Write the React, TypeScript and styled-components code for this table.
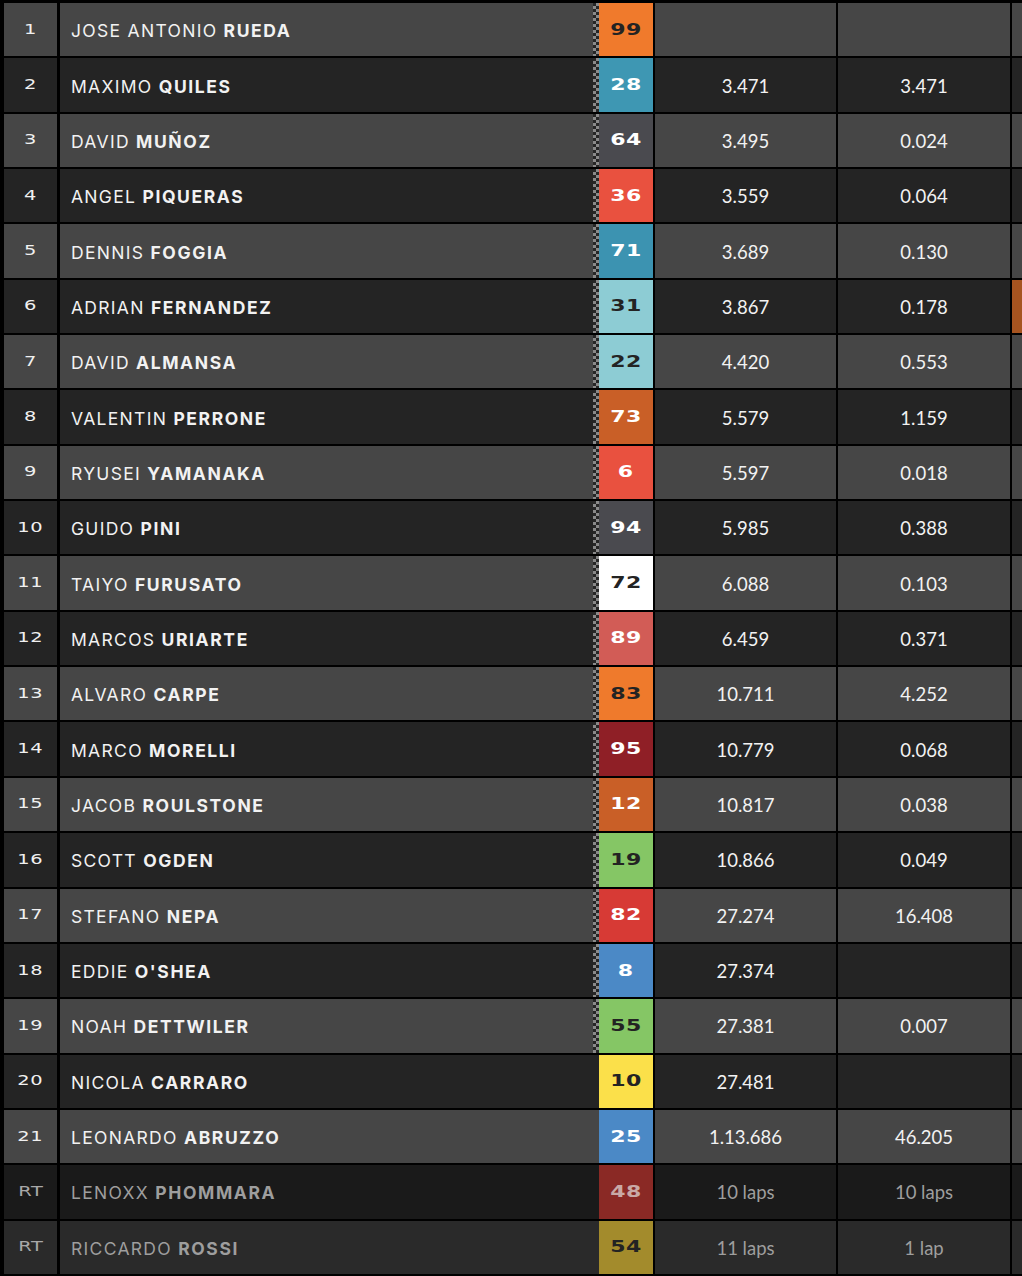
import React from "react";
import styled, { createGlobalStyle } from "styled-components";

const Global = createGlobalStyle`
  html, body { margin: 0; padding: 0; background: #000; }
  body { font-family: Inter, Lato, sans-serif; }
`;

type Rider = {
  pos: string;
  first: string;
  last: string;
  num: string;
  color: string;
  dark?: boolean;
  time: string;
  diff: string;
  flag?: boolean;
  edge?: string;
  retired?: boolean;
  numColor?: string;
};

const riders: Rider[] = [
  { pos: "1", first: "JOSE ANTONIO", last: "RUEDA", num: "99", color: "#f07a2c", dark: true, time: "", diff: "", flag: true },
  { pos: "2", first: "MAXIMO", last: "QUILES", num: "28", color: "#3e97b3", time: "3.471", diff: "3.471", flag: true },
  { pos: "3", first: "DAVID", last: "MUÑOZ", num: "64", color: "#4a4a4f", time: "3.495", diff: "0.024", flag: true },
  { pos: "4", first: "ANGEL", last: "PIQUERAS", num: "36", color: "#e9513f", time: "3.559", diff: "0.064", flag: true },
  { pos: "5", first: "DENNIS", last: "FOGGIA", num: "71", color: "#3c93b1", time: "3.689", diff: "0.130", flag: true },
  { pos: "6", first: "ADRIAN", last: "FERNANDEZ", num: "31", color: "#8dccd4", dark: true, time: "3.867", diff: "0.178", flag: true, edge: "#a65420" },
  { pos: "7", first: "DAVID", last: "ALMANSA", num: "22", color: "#8dccd4", dark: true, time: "4.420", diff: "0.553", flag: true },
  { pos: "8", first: "VALENTIN", last: "PERRONE", num: "73", color: "#c95f27", time: "5.579", diff: "1.159", flag: true },
  { pos: "9", first: "RYUSEI", last: "YAMANAKA", num: "6", color: "#e9513f", time: "5.597", diff: "0.018", flag: true },
  { pos: "10", first: "GUIDO", last: "PINI", num: "94", color: "#4a4a4f", time: "5.985", diff: "0.388", flag: true },
  { pos: "11", first: "TAIYO", last: "FURUSATO", num: "72", color: "#ffffff", dark: true, time: "6.088", diff: "0.103", flag: true },
  { pos: "12", first: "MARCOS", last: "URIARTE", num: "89", color: "#d25c56", time: "6.459", diff: "0.371", flag: true },
  { pos: "13", first: "ALVARO", last: "CARPE", num: "83", color: "#ef7a2c", dark: true, time: "10.711", diff: "4.252", flag: true },
  { pos: "14", first: "MARCO", last: "MORELLI", num: "95", color: "#8f1f26", time: "10.779", diff: "0.068", flag: true },
  { pos: "15", first: "JACOB", last: "ROULSTONE", num: "12", color: "#c95f27", time: "10.817", diff: "0.038", flag: true },
  { pos: "16", first: "SCOTT", last: "OGDEN", num: "19", color: "#85c665", dark: true, time: "10.866", diff: "0.049", flag: true },
  { pos: "17", first: "STEFANO", last: "NEPA", num: "82", color: "#d73a35", time: "27.274", diff: "16.408", flag: true },
  { pos: "18", first: "EDDIE", last: "O'SHEA", num: "8", color: "#4b89c6", time: "27.374", diff: "", flag: true },
  { pos: "19", first: "NOAH", last: "DETTWILER", num: "55", color: "#85c665", dark: true, time: "27.381", diff: "0.007", flag: true },
  { pos: "20", first: "NICOLA", last: "CARRARO", num: "10", color: "#fbe04a", dark: true, time: "27.481", diff: "" },
  { pos: "21", first: "LEONARDO", last: "ABRUZZO", num: "25", color: "#4b89c6", time: "1.13.686", diff: "46.205" },
  { pos: "RT", first: "LENOXX", last: "PHOMMARA", num: "48", color: "#8a2925", numColor: "#c9a9a6", time: "10 laps", diff: "10 laps", retired: true },
  { pos: "RT", first: "RICCARDO", last: "ROSSI", num: "54", color: "#a38b2c", dark: true, time: "11 laps", diff: "1 lap", retired: true },
];

const Table = styled.div`
  display: grid;
  grid-auto-rows: 53.35px;
  row-gap: 2px;
  padding: 3px 0 0 4px;
  width: 1018px;
  background: #000;
`;

const Row = styled.div<{ $bg: string; $fg: string }>`
  display: flex;
  align-items: stretch;
  --bg: ${(p) => p.$bg};
  color: ${(p) => p.$fg};
`;

const PosCell = styled.div`
  width: 53px;
  flex: none;
  background: var(--bg);
  display: flex;
  align-items: center;
  justify-content: center;
`;

const PosText = styled.span<{ $retired?: boolean }>`
  font-family: "DejaVu Sans", sans-serif;
  font-size: 13.7px;
  letter-spacing: 0.5px;
  display: inline-block;
  transform: scaleX(1.42);
  color: ${(p) => (p.$retired ? "#a8a8a8" : "#f0f0f0")};
  margin-top: -2px;
`;

const NameCell = styled.div`
  width: 533px;
  flex: none;
  margin-left: 3px;
  background: var(--bg);
  display: flex;
  align-items: center;
  padding-left: 11px;
  box-sizing: border-box;
  font-family: Inter, Lato, sans-serif;
  font-size: 17.5px;
  letter-spacing: 1.3px;
  padding-top: 2px;
`;

const First = styled.span`
  font-weight: 400;
  white-space: pre;
`;

const Last = styled.span`
  font-weight: 700;
  letter-spacing: 1.6px;
`;

const Checker = styled.div<{ $flag?: boolean }>`
  width: 6px;
  flex: none;
  background: ${(p) =>
    p.$flag
      ? "repeating-conic-gradient(#8a8a8a 0 25%, #262626 0 50%) 0 0 / 6px 6px"
      : "var(--bg)"};
`;

const Badge = styled.div<{ $color: string; $text: string }>`
  width: 54px;
  flex: none;
  background: ${(p) => p.$color};
  color: ${(p) => p.$text};
  display: flex;
  align-items: center;
  justify-content: center;
`;

const BadgeNum = styled.span`
  font-family: "DejaVu Sans", sans-serif;
  font-weight: 700;
  font-size: 15.5px;
  display: inline-block;
  transform: scaleX(1.42);
  letter-spacing: 0.3px;
  margin-top: 0px;
`;

const TimeCell = styled.div<{ $w: number }>`
  width: ${(p) => p.$w}px;
  flex: none;
  margin-left: 2px;
  background: var(--bg);
  display: flex;
  align-items: center;
  justify-content: center;
  font-family: Lato, sans-serif;
  font-size: 18.5px;
  font-weight: 400;
  padding-top: 1px;
  box-sizing: border-box;
`;

const Edge = styled.div<{ $color?: string }>`
  width: 10px;
  flex: none;
  margin-left: 2px;
  background: ${(p) => p.$color ?? "var(--bg)"};
`;

export default function App() {
  return (
    <>
      <Global />
      <Table>
        {riders.map((r, i) => {
          const odd = i % 2 === 0;
          const bg = r.retired ? (odd ? "#2a2a2a" : "#1a1a1a") : odd ? "#464646" : "#242424";
          const fg = r.retired ? "#9e9e9e" : "#f2f2f2";
          return (
            <Row key={i} $bg={bg} $fg={fg}>
              <PosCell>
                <PosText $retired={r.retired}>{r.pos}</PosText>
              </PosCell>
              <NameCell>
                <First>{r.first} </First>
                <Last>{r.last}</Last>
              </NameCell>
              <Checker $flag={r.flag} />
              <Badge $color={r.color} $text={r.numColor ?? (r.dark ? "#232323" : "#ffffff")}>
                <BadgeNum>{r.num}</BadgeNum>
              </Badge>
              <TimeCell $w={181}>{r.time}</TimeCell>
              <TimeCell $w={172}>{r.diff}</TimeCell>
              <Edge $color={r.edge} />
            </Row>
          );
        })}
      </Table>
    </>
  );
}
